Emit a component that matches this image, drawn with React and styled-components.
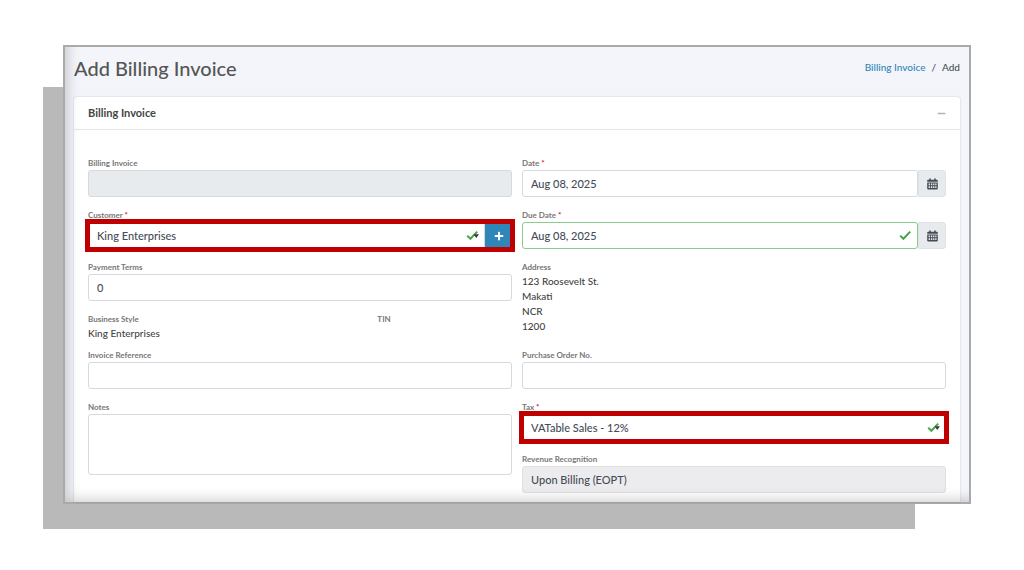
import React from 'react';
import styled, { createGlobalStyle } from 'styled-components';
import { FaMinus, FaPlus } from 'react-icons/fa';

const GlobalStyle = createGlobalStyle`
  * {
    box-sizing: border-box;
  }

  body {
    margin: 0;
    background: #fff;
    color: #4b4f54;
    font-family: 'Trebuchet MS', Lato, sans-serif;
    font-size: 10px;
    font-weight: 500;
  }
`;

const Page = styled.div`
  padding: 45px 53px 67px 63px;
`;

const Frame = styled.div`
  position: relative;

  &::before {
    content: '';
    position: absolute;
    top: 42px;
    right: 56px;
    bottom: -25px;
    left: -20px;
    background: #b9b9b9;
  }
`;

const Screen = styled.main`
  position: relative;
  padding: 0 9px;
  border: 2px solid #a9abab;
  background: #f4f5fa;

  &::after {
    content: '';
    position: absolute;
    inset: 0;
    box-shadow: inset 9px -9px 14px -7px rgba(0, 0, 0, 0.2);
    pointer-events: none;
  }
`;

const PageHeader = styled.header`
  display: flex;
  align-items: flex-start;
  justify-content: space-between;
  padding: 7px 0 15px;
`;

const Title = styled.h1`
  margin: 0;
  color: #555;
  font-size: 20px;
  font-weight: 500;
  line-height: 28px;
`;

const Breadcrumb = styled.nav`
  display: flex;
  gap: 6px;
  padding-top: 7px;
  font-size: 10px;
  line-height: 12px;
`;

const BreadcrumbLink = styled.a`
  color: #2e86b9;
  text-decoration: none;
`;

const Card = styled.section`
  border-radius: 3px 3px 0 0;
  background: #fff;
  box-shadow: 0 0 2px rgba(0, 0, 0, 0.2);
`;

const CardHeader = styled.div`
  display: flex;
  align-items: center;
  justify-content: space-between;
  padding: 8px 14px;
  border-bottom: 1px solid #e4e5e6;
`;

const CardTitle = styled.h2`
  margin: 0;
  color: #444;
  font-size: 11px;
  font-weight: 700;
  line-height: 16px;
`;

const CollapseButton = styled.button`
  display: flex;
  padding: 0;
  border: 0;
  background: none;
  color: #abb3c0;
  font-size: 9px;
`;

const Form = styled.form`
  display: grid;
  grid-template-columns: 1fr 1fr;
  column-gap: 10px;
  padding: 28px 14px 9px;
`;

const Field = styled.div`
  grid-row: span ${({ $rows }) => $rows || 1};
  margin-bottom: ${({ $plain }) => ($plain ? 9 : 13)}px;

  &:last-child {
    margin-bottom: 0;
  }
`;

const Label = styled.label`
  display: block;
  margin-bottom: 1px;
  color: #777;
  font-size: 8px;
  font-weight: 700;
  line-height: 11px;
`;

const Required = styled.span`
  color: #e02020;
`;

const Value = styled.div`
  color: #444;
  font-size: 10px;
  line-height: 15px;
`;

const SplitRow = styled.div`
  display: grid;
  grid-template-columns: 2fr 1fr;
  column-gap: 20px;
`;

const Group = styled.div`
  position: relative;
  display: flex;
  height: 27px;

  &::after {
    content: '';
    display: ${({ $marked }) => ($marked ? 'block' : 'none')};
    position: absolute;
    inset: -3px;
    border: 5px solid #c00000;
    pointer-events: none;
  }
`;

const control = `
  flex: 1;
  width: 100%;
  min-width: 0;
  margin: 0;
  border: 1px solid #d5dae1;
  border-radius: 3px;
  background: #fff;
  color: #464c57;
  font-family: inherit;
  font-size: 11px;
  font-weight: 500;
  opacity: 1;
`;

const Input = styled.input`
  ${control}
  height: 27px;
  padding: 0 8px;
  border-color: ${({ $valid }) => ($valid ? '#8bcb8b' : '#d5dae1')};

  &:disabled {
    background: #e8ebee;
  }
`;

const Select = styled.select`
  ${control}
  height: 27px;
  padding: 0 8px;
  appearance: none;

  &:disabled {
    border-color: #e0e0e4;
    background: #ececee;
  }
`;

const TextArea = styled.textarea`
  ${control}
  display: block;
  height: 61px;
  padding: 6px 8px;
  resize: none;
`;

const InputWrap = styled.div`
  position: relative;
  display: flex;
  flex: 1;
`;

const StatusIcon = styled.svg`
  position: absolute;
  top: 8px;
  right: 6px;
  width: 13px;
  height: 11px;
  pointer-events: none;
`;

const AddonButton = styled.button`
  display: flex;
  align-items: center;
  justify-content: center;
  width: ${({ $primary }) => ($primary ? 27 : 28)}px;
  padding: 0;
  border: 1px solid ${({ $primary }) => ($primary ? '#2e86b9' : '#dfe3e7')};
  border-radius: 0 3px 3px 0;
  background: ${({ $primary }) => ($primary ? '#2e86b9' : '#e8ebee')};
  color: ${({ $primary }) => ($primary ? '#fff' : '#464c57')};
  font-size: 10px;
`;

const FieldLabel = ({ id, required, children }) => (
  <Label htmlFor={id}>
    {children} {required && <Required>*</Required>}
  </Label>
);

const Status = ({ caret }) => (
  <StatusIcon viewBox="0 0 13 11" aria-hidden="true">
    <path d="M1.2 5.6 4.4 8.8 11.2 1.6" fill="none" stroke="#44a648" strokeWidth="2" />
    {caret && <path d="M7.6 4.2H13L10.3 8z" fill="#343a40" />}
  </StatusIcon>
);

const CalendarIcon = () => (
  <svg width="11" height="12" viewBox="0 0 11 12" aria-hidden="true">
    <path d="M2.2 0.5h1.6v1.2h3.4V0.5h1.6v1.2H10a.8.8 0 0 1 .8.8v1.2H.2V2.5a.8.8 0 0 1 .8-.8h1.2z" fill="currentColor" />
    <path d="M.2 4.4h10.6v6.1a1 1 0 0 1-1 1H1.2a1 1 0 0 1-1-1z" fill="currentColor" />
    <path
      d="M1.6 5.5h1.5v1.7H1.6zM4 5.5h1.3v1.7H4zM6.1 5.5h1.3v1.7H6.1zM8.2 5.5h1.3v1.7H8.2zM1.6 8.3h1.5V10H1.6zM4 8.3h1.3V10H4zM6.1 8.3h1.3V10H6.1zM8.2 8.3h1.3V10H8.2z"
      fill="#e8ebee"
    />
  </svg>
);

const DateField = ({ id, label, valid }) => (
  <Field>
    <FieldLabel id={id} required>{label}</FieldLabel>
    <Group>
      <InputWrap>
        <Input id={id} defaultValue="Aug 08, 2025" $valid={valid} />
        {valid && <Status />}
      </InputWrap>
      <AddonButton type="button" aria-label={`Pick ${label}`}>
        <CalendarIcon />
      </AddonButton>
    </Group>
  </Field>
);

const App = () => (
  <Page>
    <GlobalStyle />
    <Frame>
      <Screen>
        <PageHeader>
          <Title>Add Billing Invoice</Title>
          <Breadcrumb aria-label="Breadcrumb">
            <BreadcrumbLink href="#billing-invoice">Billing Invoice</BreadcrumbLink>
            <span>/</span>
            <span>Add</span>
          </Breadcrumb>
        </PageHeader>
        <Card>
          <CardHeader>
            <CardTitle>Billing Invoice</CardTitle>
            <CollapseButton type="button" aria-label="Collapse">
              <FaMinus />
            </CollapseButton>
          </CardHeader>
          <Form>
            <Field>
              <FieldLabel id="number">Billing Invoice</FieldLabel>
              <Input id="number" disabled />
            </Field>
            <DateField id="date" label="Date" />
            <Field>
              <FieldLabel id="customer" required>Customer</FieldLabel>
              <Group $marked>
                <InputWrap>
                  <Select id="customer">
                    <option>King Enterprises</option>
                  </Select>
                  <Status caret />
                </InputWrap>
                <AddonButton type="button" aria-label="Add customer" $primary>
                  <FaPlus />
                </AddonButton>
              </Group>
            </Field>
            <DateField id="due-date" label="Due Date" valid />
            <Field>
              <FieldLabel id="terms">Payment Terms</FieldLabel>
              <Input id="terms" defaultValue="0" />
            </Field>
            <Field $rows={2} $plain>
              <Label as="div">Address</Label>
              <Value>123 Roosevelt St.</Value>
              <Value>Makati</Value>
              <Value>NCR</Value>
              <Value>1200</Value>
            </Field>
            <Field $plain>
              <SplitRow>
                <div>
                  <Label as="div">Business Style</Label>
                  <Value>King Enterprises</Value>
                </div>
                <div>
                  <Label as="div">TIN</Label>
                </div>
              </SplitRow>
            </Field>
            <Field>
              <FieldLabel id="reference">Invoice Reference</FieldLabel>
              <Input id="reference" />
            </Field>
            <Field>
              <FieldLabel id="po">Purchase Order No.</FieldLabel>
              <Input id="po" />
            </Field>
            <Field $rows={2}>
              <FieldLabel id="notes">Notes</FieldLabel>
              <TextArea id="notes" />
            </Field>
            <Field>
              <FieldLabel id="tax" required>Tax</FieldLabel>
              <Group $marked>
                <InputWrap>
                  <Select id="tax">
                    <option>VATable Sales - 12%</option>
                  </Select>
                  <Status caret />
                </InputWrap>
              </Group>
            </Field>
            <Field>
              <FieldLabel id="recognition">Revenue Recognition</FieldLabel>
              <Select id="recognition" disabled>
                <option>Upon Billing (EOPT)</option>
              </Select>
            </Field>
          </Form>
        </Card>
      </Screen>
    </Frame>
  </Page>
);

export default App;
